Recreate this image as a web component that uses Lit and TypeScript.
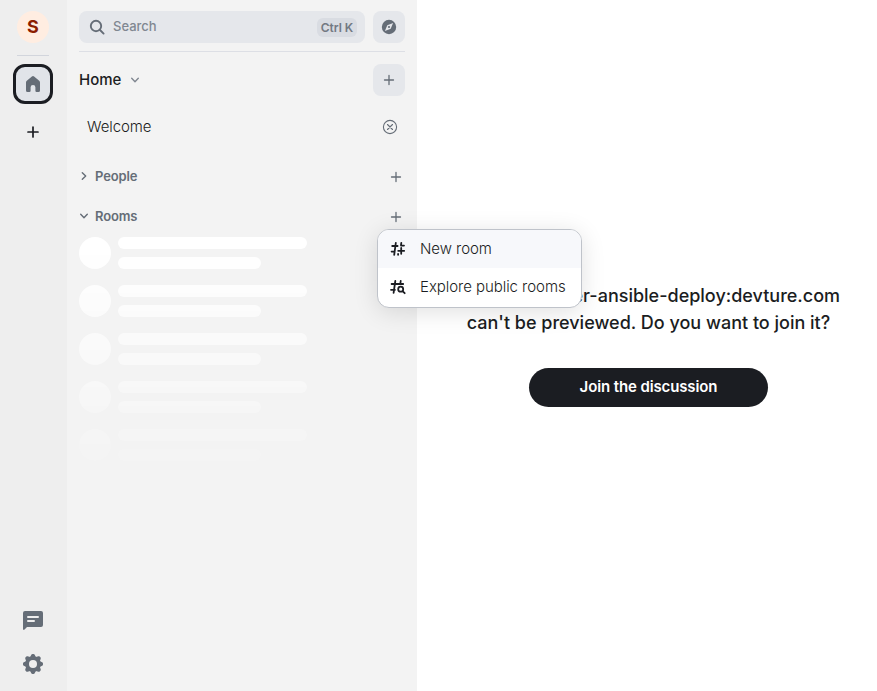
import { LitElement, html, css, svg } from "lit";
import { customElement } from "lit/decorators.js";

const plus = (size: number, width = 1.3, half = 4.5) => html`<svg width=${size} height=${size} viewBox="0 0 20 20">
  <path d="M${10 - half} 10h${half * 2}M10 ${10 - half}v${half * 2}" fill="none" stroke="currentColor" stroke-width=${width} stroke-linecap="round" />
</svg>`;

const chevron = (size: number) => html`<svg width=${size} height=${size} viewBox="0 0 10 10">
  <path d="M1.7 3.3 5 6.7 8.3 3.3" fill="none" stroke="currentColor" stroke-width="1.4" stroke-linecap="round" stroke-linejoin="round" />
</svg>`;

const gearTeeth = [0, 45, 90, 135].map(
  (a) => svg`<path d="M9.2 5 10.3 2.8Q10.7 2 11.5 2H12.5Q13.3 2 13.7 2.8L14.8 5V19L13.7 21.2Q13.3 22 12.5 22H11.5Q10.7 22 10.3 21.2L9.2 19Z" transform="rotate(${a} 12 12)" />`
);

@customElement("app-root")
export class AppRoot extends LitElement {
  static styles = css`
    :host {
      display: block;
      position: relative;
      height: 691px;
      overflow: hidden;
      background: #fff;
      color: #1b1d22;
      font-family: Inter, "Liberation Sans", sans-serif;
      font-size: 15px;
    }
    * { box-sizing: border-box; }
    svg { display: block; flex: none; }
    .shell { display: flex; height: 100%; }
    .rail {
      width: 67px;
      padding: 11px 1px 15px 0;
      background: #eeeeee;
      display: flex;
      flex-direction: column;
      align-items: center;
      color: #656d77;
    }
    .avatar {
      width: 32px; height: 32px; border-radius: 50%;
      background: #ffede1; color: #8b1c00;
      font-size: 18px; font-weight: 700; line-height: 32px; text-align: center;
    }
    .rail-line { width: 32px; height: 1px; margin: 12px 0 8px; background: #d2d5dc; }
    .home {
      width: 40px; height: 40px; border: 3px solid #1b1d22; border-radius: 12px;
      background: #e1e4e9; display: grid; place-items: center;
    }
    .add { margin-top: 18px; color: #1b1d22; }
    .spacer { flex: 1; }
    .gear { margin-top: 20px; }
    .panel { width: 350px; padding: 11px 12px; background: #f3f3f3; }
    .top { display: flex; gap: 8px; padding-bottom: 8px; border-bottom: 1px solid #dddfe5; }
    .search {
      flex: 1; height: 32px; border-radius: 8px; background: #e5e7eb;
      display: flex; align-items: center; padding: 0 8px 0 9px; color: #656d77;
    }
    .search-label { flex: 1; margin-left: 7px; padding-bottom: 2px; font-size: 13px; font-weight: 500; color: #808791; }
    .key {
      width: 40px; height: 19px; border-radius: 6px; background: #d9dce2;
      font-size: 12px; font-weight: 600; line-height: 20px; text-align: center; color: #737982;
    }
    .square {
      width: 32px; height: 32px; border-radius: 8px; background: #e5e7eb;
      display: grid; place-items: center; color: #656d77;
    }
    .title { display: flex; align-items: center; margin-top: 12px; color: #808791; }
    .title-text { width: 42px; font-weight: 500; font-size: 15px; color: #1b1d22; margin-right: 9px; padding-bottom: 1px; }
    .grow { flex: 1; }
    .welcome {
      display: flex; align-items: center; justify-content: space-between;
      height: 32px; margin-top: 15px; padding: 0 7px 0 8px; font-weight: 300; letter-spacing: -0.1px;
    }
    .welcome span { padding-bottom: 2px; }
    .section {
      display: flex; align-items: center; height: 24px; margin-top: 16px;
      color: #656d77; font-size: 13px; font-weight: 600; letter-spacing: -0.15px;
    }
    .section.first { margin-top: 21px; }
    .section .name { flex: 1; margin-left: 6px; }
    .section .more { margin: 2px -1px 0 0; }
    .shut { transform: rotate(-90deg); }
    .skeleton {
      display: grid; gap: 16px; height: 240px; margin-top: 9px; align-content: start;
      -webkit-mask-image: linear-gradient(180deg, #000, transparent 102%);
      mask-image: linear-gradient(180deg, #000, transparent 102%);
    }
    .row { display: grid; grid-template-columns: 32px 1fr; column-gap: 7px; height: 32px; }
    .disc { width: 32px; height: 32px; border-radius: 50%; background: #fff; }
    .bars { display: flex; flex-direction: column; justify-content: space-between; }
    .bar { width: 189px; height: 12px; border-radius: 6px; background: #fff; }
    .bar.short { width: 143px; }
    .main {
      flex: 1; display: flex; flex-direction: column; align-items: center;
      padding: 282px 0 0 3px; text-align: center;
    }
    .question { font-size: 18px; font-weight: 500; line-height: 27px; white-space: nowrap; }
    .join {
      width: 239px; height: 39px; margin-top: 32px; border-radius: 20px; letter-spacing: -0.12px;
      background: #1b1d22; color: #fff; font-size: 15px; font-weight: 600; line-height: 37px;
    }
    .menu {
      position: absolute; left: 377px; top: 229px; width: 205px; height: 79px;
      border: 1px solid #bfc3ca; border-radius: 12px; background: #fff; overflow: hidden;
      box-shadow: 0 4px 24px rgba(0, 0, 0, 0.12);
    }
    .item {
      display: flex; align-items: center; gap: 12px; height: 38px; padding-left: 10px;
      font-weight: 300; white-space: nowrap; letter-spacing: -0.05px;
    }
    .item span { padding-bottom: 2px; }
    .item.hover { background: #f7f8fb; }
  `;

  render() {
    return html`
      <div class="shell">
        <div class="rail">
          <div class="avatar">S</div>
          <div class="rail-line"></div>
          <div class="home">
            <svg width="20" height="20" viewBox="0 0 20 20" fill="currentColor">
              <path d="M3 8.5Q3 7.5 3.8 6.8L8.9 2.4Q10 1.5 11.1 2.4L16.2 6.8Q17 7.5 17 8.5V16.5Q17 18 15.5 18H13.6Q12.4 18 12.4 16.8V13.2Q12.4 11 10 11T7.6 13.2V16.8Q7.6 18 6.4 18H4.5Q3 18 3 16.5Z" />
            </svg>
          </div>
          <div class="add">${plus(20, 1.7, 5)}</div>
          <div class="spacer"></div>
          <svg width="24" height="24" viewBox="0 0 24 24" fill="currentColor">
            <path fill-rule="evenodd" d="M4 3H20Q22 3 22 5V17Q22 19 20 19H6L3.6 21.4Q2 22.6 2 20.8V5Q2 3 4 3ZM7 8a1 1 0 0 0 0 2H17a1 1 0 0 0 0-2ZM7 12a1 1 0 0 0 0 2H13a1 1 0 0 0 0-2Z" />
          </svg>
          <svg class="gear" width="24" height="24" viewBox="0 0 24 24" fill="currentColor">
            <mask id="hub"><rect width="24" height="24" fill="#fff" /><circle cx="12" cy="12" r="4" fill="#000" /></mask>
            <g mask="url(#hub)"><circle cx="12" cy="12" r="7.8" />${gearTeeth}</g>
          </svg>
        </div>

        <div class="panel">
          <div class="top">
            <div class="search">
              <svg width="18" height="18" viewBox="0 0 18 18" fill="none" stroke="currentColor" stroke-width="1.9" stroke-linecap="round">
                <circle cx="8" cy="8" r="5.2" /><path d="m12 12 3.6 3.6" />
              </svg>
              <span class="search-label">Search</span>
              <span class="key">Ctrl K</span>
            </div>
            <div class="square">
              <svg width="16" height="16" viewBox="0 0 16 16">
                <circle cx="8" cy="8" r="7.2" fill="currentColor" />
                <path d="M12.1 3.9 9.7 9.7 3.9 12.1 6.3 6.3Z" fill="#e5e7eb" />
                <circle cx="8" cy="8" r="1.1" fill="currentColor" />
              </svg>
            </div>
          </div>

          <div class="title">
            <span class="title-text">Home</span>${chevron(10)}
            <span class="grow"></span>
            <div class="square">${plus(20)}</div>
          </div>

          <div class="welcome">
            <span>Welcome</span>
            <svg width="16" height="16" viewBox="0 0 16 16" fill="none" stroke="#656d77" stroke-width="1.1" stroke-linecap="round">
              <circle cx="8" cy="8" r="6.6" /><path d="m5.5 5.5 5 5m0-5-5 5" />
            </svg>
          </div>

          <div class="section first">
            <div class="shut">${chevron(10)}</div>
            <span class="name">People</span>
            <div class="more">${plus(20)}</div>
          </div>
          <div class="section">
            ${chevron(10)}
            <span class="name">Rooms</span>
            <div class="more">${plus(20)}</div>
          </div>

          <div class="skeleton">
            ${[0, 1, 2, 3, 4].map(
              () => html`<div class="row">
                <div class="disc"></div>
                <div class="bars"><div class="bar"></div><div class="bar short"></div></div>
              </div>`
            )}
          </div>
        </div>

        <div class="main">
          <div class="question">#matrix-docker-ansible-deploy:devture.com<br />can't be previewed. Do you want to join it?</div>
          <div class="join">Join the discussion</div>
        </div>
      </div>

      <div class="menu">
        <div class="item hover">
          <svg width="20" height="20" viewBox="0 0 20 20" fill="none" stroke="currentColor" stroke-width="1.8" stroke-linecap="round">
            <path d="M4.2 7H9.6M7.8 4 6.2 15.8M3.6 12.6H6.4M13.3 3.8 13 6.2M13 6.6H16M10.1 15V15.8M10.2 11.8H16.2M13.2 9V14.8" />
          </svg>
          <span>New room</span>
        </div>
        <div class="item">
          <svg width="20" height="20" viewBox="0 0 20 20" fill="none" stroke="currentColor" stroke-width="1.8" stroke-linecap="round">
            <path d="M3.6 7H15.2M3 12.8H7M7.3 4 5.6 15.8M12.7 4 12.3 7" />
            <circle cx="12.7" cy="12.2" r="2.5" /><path d="m14.8 14.3 1.9 1.9" />
          </svg>
          <span>Explore public rooms</span>
        </div>
      </div>
    `;
  }
}
